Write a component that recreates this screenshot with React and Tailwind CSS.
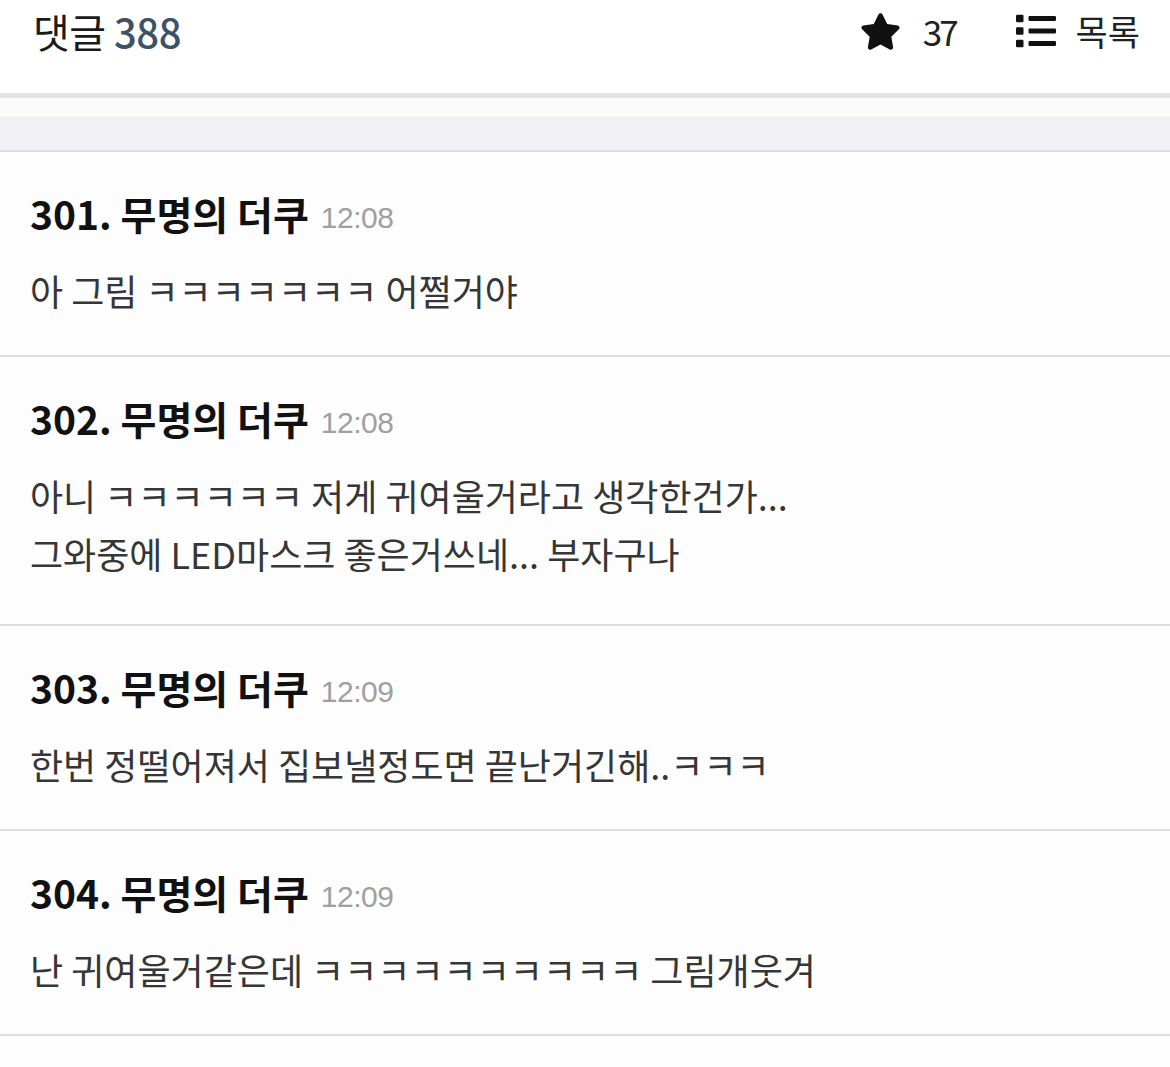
import React from "react";
import { FaStar, FaList } from "react-icons/fa";

const font = { fontFamily: '"Noto Sans CJK KR", "Noto Sans", sans-serif' };

const comments = [
  { n: 301, t: "12:08", lines: ["아 그림 ㅋㅋㅋㅋㅋㅋㅋ 어쩔거야"] },
  { n: 302, t: "12:08", lines: ["아니 ㅋㅋㅋㅋㅋㅋ 저게 귀여울거라고 생각한건가...", "그와중에 LED마스크 좋은거쓰네... 부자구나"] },
  { n: 303, t: "12:09", lines: ["한번 정떨어져서 집보낼정도면 끝난거긴해..ㅋㅋㅋ"] },
  { n: 304, t: "12:09", lines: ["난 귀여울거같은데 ㅋㅋㅋㅋㅋㅋㅋㅋㅋㅋ 그림개웃겨"] },
];

export default function App() {
  return (
    <div className="w-[1170px] h-[1067px] bg-[#fdfdfe] overflow-hidden" style={font}>
      <div className="h-[93px] bg-white flex items-start justify-between pl-[33px] pr-[30px] pt-[5px]">
        <div className="text-[40px] leading-[52px] text-[#1a1a1a] tracking-[-0.5px]">
          댓글 <span className="text-[#3c5266] font-medium">388</span>
        </div>
        <div className="flex items-center h-[52px]">
          <FaStar className="w-[41px] h-[41px] text-[#111]" />
          <span className="ml-[22px] text-[35px] text-[#222] tracking-[-3px]">37</span>
          <FaList className="ml-[60px] w-[40px] h-[40px] text-[#111]" />
          <span className="ml-[20px] text-[35px] text-[#222]">목록</span>
        </div>
      </div>
      <div className="h-[5px] bg-[#e4e4e8]" />
      <div className="h-[19px] bg-[#fbfbfc]" />
      <div className="h-[35px] bg-[#f1f0f4] border-b-2 border-[#dedee0]" />
      {comments.map((c) => (
        <div key={c.n} className={"border-b-2 border-[#dedee0] pl-[30px] pt-[37px] " + (c.lines.length > 1 ? "pb-[42px]" : "pb-[36px]")}>
          <div className="flex items-baseline h-[48px] leading-[48px]">
            <span className="text-[39px] font-bold text-[#111]">{c.n}. 무명의 더쿠</span>
            <span className="ml-[12px] text-[30px] text-[#a0a0a0] tracking-[-0.5px] relative top-[-2px]" style={{ fontFamily: '"Liberation Sans", sans-serif' }}>{c.t}</span>
          </div>
          <div className="mt-[24px]">
            {c.lines.map((l, i) => (
              <div key={i} className="text-[36px] leading-[58px] text-[#363636]">{l}</div>
            ))}
          </div>
        </div>
      ))}
    </div>
  );
}
